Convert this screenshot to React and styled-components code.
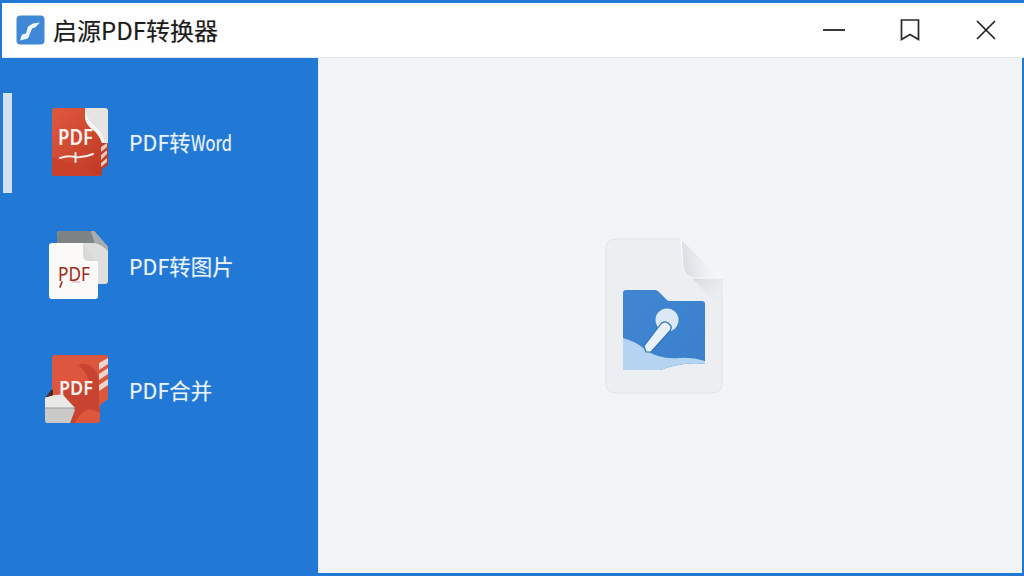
import React from "react";
import styled, { createGlobalStyle } from "styled-components";

const Global = createGlobalStyle`
  html, body { margin: 0; padding: 0; width: 1024px; height: 576px; overflow: hidden; }
  body { font-family: "Noto Sans CJK SC", "Noto Sans", sans-serif; }
`;

const Window = styled.div`
  width: 1024px; height: 576px; box-sizing: border-box;
  padding: 3px 2px;
  background: #2279d5;
  display: flex; flex-direction: column;
`;
const TitleBar = styled.header`
  height: 55px; flex: none; box-sizing: border-box;
  background: #fefefe;
  border-bottom: 1px solid #e4e7eb;
  display: flex; align-items: center;
  padding-left: 14px;
  margin-right: -2px;
`;
const AppLogo = styled.svg`
  width: 30px; height: 31px; flex: none;
`;
const AppTitle = styled.h1`
  margin: 0 0 0 7px; flex: 1;
  font-size: 24px; font-weight: 400; line-height: 1;
  color: #1c1c1c;
  text-shadow: 0 0 1px rgba(28, 28, 28, 0.3);
`;
const WinButton = styled.button`
  width: 76px; height: 54px; padding: 0; border: 0; background: none;
  display: flex; align-items: center; justify-content: center;
`;
const Body = styled.div`
  flex: 1; display: flex; min-height: 0;
`;
const Sidebar = styled.nav`
  width: 316px; flex: none; padding-top: 23px;
  background: #2279d5;
`;
const NavRow = styled.div`
  height: 124px; display: flex; align-items: center;
`;
const Indicator = styled.span`
  width: 9px; height: 100px; margin-left: 1px; flex: none;
  background: ${p => (p.$active ? "#d3e2f2" : "transparent")};
`;
const NavIcon = styled.svg`
  width: 64px; height: 72px; margin-left: 32px; flex: none;
`;
const NavLabel = styled.span`
  margin: -2px 0 0 21px;
  font-size: 21.5px; line-height: 1; color: #e9f3fd;
  text-shadow: 0 0 1px rgba(233, 243, 253, 0.35);
`;
const NarrowWord = styled.span`
  display: inline-block;
  transform: scaleX(0.77);
  transform-origin: left center;
`;
const Main = styled.main`
  flex: 1; background: #f2f4f8;
  display: flex; align-items: center; justify-content: center;
  padding: 2px 11px 0 0;
  box-shadow: inset 1px 0 0 #e3ecf6;
`;
const Placeholder = styled.svg`
  width: 130px; height: 166px;
`;

const PdfMark = ({ x, y, w, size, weight, fill }) => (
  <text
    x={x} y={y} textLength={w} lengthAdjust="spacingAndGlyphs"
    fontFamily="'Noto Sans', sans-serif" fontWeight={weight} fontSize={size} fill={fill}
  >
    PDF
  </text>
);

const PdfToWordIcon = () => (
  <NavIcon viewBox="0 0 64 72">
    <defs>
      <linearGradient id="r1" x1="0" y1="0" x2="1" y2="1">
        <stop offset="0" stopColor="#e0583e" />
        <stop offset="1" stopColor="#bd3723" />
      </linearGradient>
    </defs>
    <path d="M11 1 H60 Q64 1 64 5 V58 L58 62 V66 Q58 69 55 69 H11 Q8 69 8 66 V4 Q8 1 11 1 Z" fill="url(#r1)" />
    <path d="M8 50 L58 69 H11 Q8 69 8 66 Z" fill="#c9412b" />
    <path d="M56 33 L64 39 V58 L56 62 Z" fill="#bf3d29" />
    <path d="M57 40 L63 36 V40 L57 45 Z M57 48 L63 43 V47 L57 53 Z M57 56 L63 51 V55 L57 60 Z" fill="#efc9bf" />
    <path d="M41 1 H61 Q64 1 64 4 V36 H58 Q55 27 48 22 Q41 17 41 9 Z" fill="#e6e3e0" />
    <path d="M41 9 Q41 17 48 22 Q55 27 58 36 H61 Q58 24 50 18 Q44 14 41 4 Z" fill="#f8f6f4" />
    <PdfMark x={14} y={38} w={35} size={21} weight={600} fill="#fbf3ef" />
    <path d="M16 51 Q24 48 31 50 Q40 51 49 47 M31.500 46 V55" stroke="#f6ebe6" strokeWidth="2" fill="none" strokeLinecap="round" />
  </NavIcon>
);

const PdfToImageIcon = () => (
  <NavIcon viewBox="0 0 64 72">
    <path d="M15 0 H50 L64 16 V50 Q64 53 61 53 H13 V4 Q13 0 15 0 Z" fill="#dededd" />
    <path d="M15 0 H47 L51 12 H13 V4 Q13 0 15 0 Z" fill="#7e8386" />
    <path d="M47 0 H50 L64 16 V20 Q58 14 51 12 Z" fill="#a9acac" />
    <path d="M8 12 H39 L54 30 V65 Q54 68 51 68 H8 Q5 68 5 65 V15 Q5 12 8 12 Z" fill="#fbfaf8" />
    <path d="M39 12 L54 30 H45 Q39 30 39 24 Z" fill="#d9d9d7" />
    <PdfMark x={14} y={50} w={32} size={20} weight={400} fill="#9e2a1b" />
    <path d="M16 56 L18 51" stroke="#9e2a1b" strokeWidth="1.600" strokeLinecap="round" />
    <path d="M28 51 H36" stroke="#d9a79f" strokeWidth="1" />
  </NavIcon>
);

const PdfMergeIcon = () => (
  <NavIcon viewBox="0 0 64 72">
    <path d="M11 0 H61 Q64 0 64 3 V44 L56 50 V65 Q56 68 53 68 H11 Q8 68 8 65 V3 Q8 0 11 0 Z" fill="#dc573e" />
    <path d="M34 10 Q46 6 53 18 Q55 24 55 30 V50 L56 58 Q44 50 36 60 L31 68 H20 V28 H46 Q42 16 34 10 Z" fill="#c94430" />
    <path d="M55 8 L64 3 V9 L55 15 Z M55 19 L64 13 V19 L55 25 Z M55 30 L64 24 V30 L55 36 Z" fill="#efd5cd" />
    <PdfMark x={15} y={40} w={34} size={19.500} weight={600} fill="#fbf3ef" />
    <path d="M2 42 L7 35 H9 V42 Z" fill="#4a2a26" />
    <path d="M1 44 Q1 42 4 42 Q12 39 19 40 L31 55 L26 68 H3 Q1 68 1 65 Z" fill="#c9c9c7" />
    <path d="M1 53 V44 Q1 42 4 42 Q12 39 19 40 L31 53 Z" fill="#e9e9e7" />
    <path d="M1 53 H31" stroke="#9a9a98" strokeWidth="1" />
  </NavIcon>
);

const MainDocIcon = () => (
  <Placeholder viewBox="0 0 130 166">
    <defs>
      <linearGradient id="fold" x1="0" y1="0.600" x2="1" y2="0.400">
        <stop offset="0" stopColor="#d9dce1" />
        <stop offset="0.550" stopColor="#eef0f3" />
        <stop offset="1" stopColor="#fafbfc" />
      </linearGradient>
      <linearGradient id="folder" x1="0" y1="0" x2="1" y2="1">
        <stop offset="0" stopColor="#4086d2" />
        <stop offset="1" stopColor="#3a80cb" />
      </linearGradient>
      <linearGradient id="shade" x1="0" y1="0" x2="1" y2="1">
        <stop offset="0" stopColor="#d6d8dc" />
        <stop offset="1" stopColor="#eceef1" stopOpacity="0" />
      </linearGradient>
    </defs>
    <path d="M16 5 H81 L122 44 V149 Q122 159 112 159 H16 Q6 159 6 149 V15 Q6 5 16 5 Z" fill="#eceef1" stroke="#e0e3e7" strokeWidth="1" />
    <path d="M92 44 H122 V75 Z" fill="url(#shade)" />
    <path d="M81 5 L122 44 H94 Q84 43 83 33 Z" fill="url(#fold)" stroke="#fbfcfd" strokeWidth="1" />
    <path d="M23 59 Q23 56 26 56 H55 Q57 56 59 58 L66 65 Q67 67 70 67 H102 Q105 67 105 70 V130 Q85 127 60 136 H23 Z" fill="url(#folder)" />
    <path d="M23 104 Q35 107 46 116 Q60 126 80 124 Q92 123 105 127 V130 Q85 127 60 136 H23 Z" fill="#b5d4f1" />
    <circle cx="67" cy="86" r="11.500" fill="#dbe8f5" />
    <path d="M44 112 L60 91 Q63 86 68 89 L71 92 Q72 95 69 98 L51 118 L46 118 Z" fill="#e8f1fa" stroke="#2f73bd" strokeWidth="1.200" strokeLinejoin="round" />
  </Placeholder>
);

const items = [
  { label: <>PDF转<NarrowWord>Word</NarrowWord></>, key: "word", Icon: PdfToWordIcon, active: true },
  { label: "PDF转图片", key: "image", Icon: PdfToImageIcon },
  { label: "PDF合并", key: "merge", Icon: PdfMergeIcon },
];

export default function App() {
  return (
    <Window>
      <Global />
      <TitleBar>
        <AppLogo viewBox="0 0 30 31">
          <rect x="0.500" y="0.500" width="28" height="29" rx="4" fill="#3f88d6" />
          <path d="M4 25.500 L12 23.500 L16 13.500 L19 12.500 L24 7.500 L17 8.500 L12 11.500 L10 18.500 L6 19.500 Z" fill="#f2f7fc" />
        </AppLogo>
        <AppTitle>启源PDF转换器</AppTitle>
        <WinButton aria-label="minimize">
          <svg width="22" height="4"><path d="M0 2 H22" stroke="#222" strokeWidth="1.800" /></svg>
        </WinButton>
        <WinButton aria-label="maximize">
          <svg width="20" height="22" viewBox="0 0 20 22" fill="none">
            <path d="M1.500 1 H18.500 V20.500 L10 15.500 L1.500 20.500 Z" stroke="#2a2a2a" strokeWidth="1.700" />
          </svg>
        </WinButton>
        <WinButton aria-label="close">
          <svg width="20" height="20" viewBox="0 0 20 20" fill="none">
            <path d="M1 1 L19 19 M19 1 L1 19" stroke="#222" strokeWidth="1.700" />
          </svg>
        </WinButton>
      </TitleBar>
      <Body>
        <Sidebar>
          {items.map(({ label, key, Icon, active }) => (
            <NavRow key={key}>
              <Indicator $active={active} />
              <Icon />
              <NavLabel>{label}</NavLabel>
            </NavRow>
          ))}
        </Sidebar>
        <Main>
          <MainDocIcon />
        </Main>
      </Body>
    </Window>
  );
}
